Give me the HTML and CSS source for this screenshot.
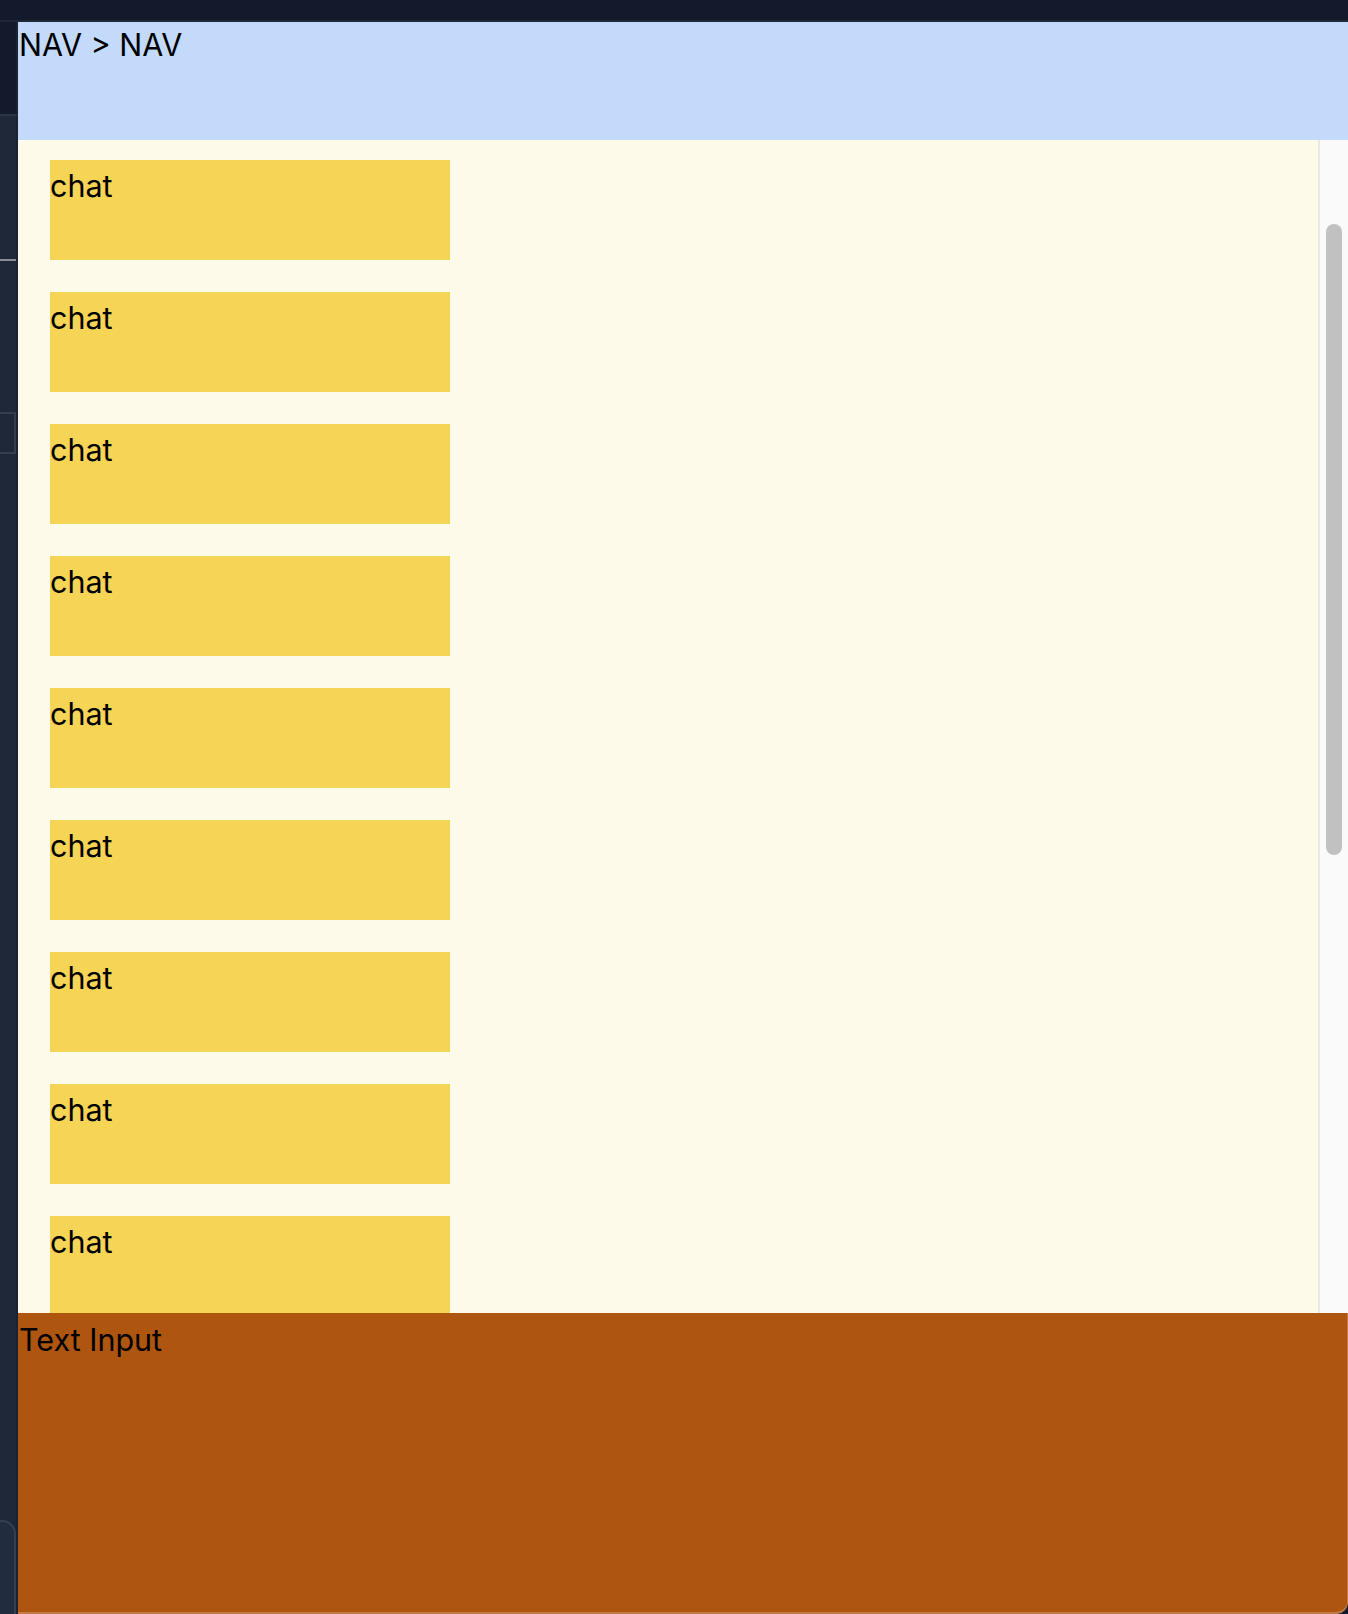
FILE: index.html
```html
<!DOCTYPE html>
<html>
<head>
<meta charset="utf-8">
<link rel="stylesheet" href="styles.css">
</head>
<body>
<div class="topbar"></div>
<div class="window">
  <aside class="sidebar">
    <div class="sb-head"></div>
    <div class="sb-body">
      <div class="sb-rule"></div>
      <div class="sb-box"></div>
      <div class="sb-spacer"></div>
      <div class="sb-card"></div>
    </div>
  </aside>
  <main class="main">
    <nav class="nav">NAV &gt; NAV</nav>
    <section class="scroll">
      <div class="chats">
        <div class="chat">chat</div>
        <div class="chat">chat</div>
        <div class="chat">chat</div>
        <div class="chat">chat</div>
        <div class="chat">chat</div>
        <div class="chat">chat</div>
        <div class="chat">chat</div>
        <div class="chat">chat</div>
        <div class="chat">chat</div>
      </div>
      <div class="track"><div class="thumb"></div></div>
    </section>
    <div class="input">Text Input</div>
  </main>
</div>
</body>
</html>
```

FILE: styles.css
```css
html, body {
  margin: 0;
  padding: 0;
}
body {
  width: 1348px;
  height: 1614px;
  overflow: hidden;
  background: #131a2b;
  font-family: Inter, "Noto Sans", "Liberation Sans", sans-serif;
  color: #000;
}
.topbar {
  height: 20px;
  background: #131a2b;
  border-bottom: 2px solid #1f2739;
}
.window {
  display: flex;
  height: 1592px;
}
.sidebar {
  width: 18px;
  flex: none;
  display: flex;
  flex-direction: column;
  background: #1f2839;
}
.sb-head {
  height: 94px;
  background: #131a2b;
  border-right: 2px solid #1a2233;
  border-bottom: 2px solid #2c3343;
  box-sizing: border-box;
}
.sb-body {
  flex: 1;
  display: flex;
  flex-direction: column;
  border-right: 2px solid #1a2233;
}
.sb-rule {
  margin-top: 143px;
  height: 2px;
  width: 16px;
  background: #8a8d94;
}
.sb-box {
  margin-top: 151px;
  height: 38px;
  width: 14px;
  border: 2px solid #353e50;
  border-left: none;
}
.sb-spacer {
  flex: 1;
}
.sb-card {
  height: 92px;
  width: 14px;
  border: 2px solid #353f53;
  border-left: none;
  border-bottom: none;
  border-top-right-radius: 14px;
  background: #232c3e;
}
.main {
  flex: 1;
  display: flex;
  flex-direction: column;
  min-width: 0;
}
.nav {
  height: 118px;
  box-sizing: border-box;
  background: #c4dafa;
  font-size: 30.5px;
  line-height: 46px;
  padding-left: 1px;
}
.scroll {
  height: 1173px;
  display: flex;
  background: #fefae9;
}
.chats {
  flex: 1;
  overflow: hidden;
  padding: 20px 32px 0;
  display: flex;
  flex-direction: column;
  gap: 32px;
}
.chat {
  flex: none;
  width: 400px;
  height: 100px;
  background: #f6d455;
  font-size: 30.5px;
  line-height: 52px;
}
.track {
  width: 28px;
  flex: none;
  background: #fafafa;
  border-left: 2px solid #e8e8e8;
  padding-top: 84px;
  box-sizing: content-box;
}
.thumb {
  width: 16px;
  height: 631px;
  margin-left: 6px;
  border-radius: 8px;
  background: #c1c1c1;
}
.input {
  flex: 1;
  background: #ae5510;
  font-size: 30.5px;
  line-height: 54px;
  padding-left: 1px;
  border-bottom-right-radius: 12px;
  border-right: 1px solid #c27a48;
  border-bottom: 2px solid #c27a48;
}
```
